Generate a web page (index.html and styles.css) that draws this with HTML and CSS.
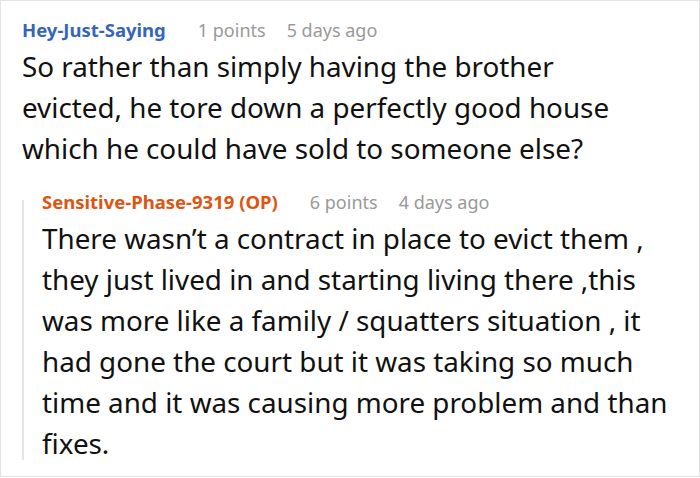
FILE: index.html
```html
<!DOCTYPE html>
<html>
<head>
<meta charset="utf-8">
<link rel="stylesheet" href="styles.css">
</head>
<body>
<div class="card">
  <div class="comment">
    <div class="meta">
      <span class="user user-blue">Hey-Just-Saying</span>
      <span class="info">1 points</span>
      <span class="info">5 days ago</span>
    </div>
    <p class="body body-top">So rather than simply having the brother evicted, he tore down a perfectly good house which he could have sold to someone else?</p>
    <div class="reply">
      <div class="thread"></div>
      <div class="reply-content">
        <div class="meta">
          <span class="user user-orange">Sensitive-Phase-9319 (OP)</span>
          <span class="info">6 points</span>
          <span class="info">4 days ago</span>
        </div>
        <p class="body body-reply">There wasn’t a contract in place to evict them , they just lived in and starting living there ,this was more like a family / squatters situation , it had gone the court but it was taking so much time and it was causing more problem and than fixes.</p>
      </div>
    </div>
  </div>
</div>
</body>
</html>
```
FILE: styles.css
```css
html, body {
  margin: 0;
  padding: 0;
  background: #fff;
}
.card {
  box-sizing: border-box;
  width: 700px;
  height: 477px;
  border: 1px solid #e3e3e3;
  padding: 13px 0 0 21px;
  font-family: "Noto Sans", "Open Sans", sans-serif;
  color: #111;
  overflow: hidden;
}
.meta {
  display: flex;
  align-items: baseline;
  gap: 21px;
  font-size: 18px;
  line-height: 32px;
  height: 32px;
}
.user {
  font-weight: 700;
  font-size: 18.5px;
  margin-right: 11px;
}
.user-blue { color: #3366bb; }
.user-orange { color: #dd5511; }
.info { color: #999; }
.body {
  margin: 0;
  font-size: 27.8px;
  line-height: 41px;
}
.body-top {
  width: 625px;
}
.body-reply {
  width: 650px;
}
.reply {
  display: flex;
  margin-top: 17px;
}
.thread {
  flex: none;
  width: 2px;
  background: #e6e6e6;
  margin: 14px 0 4px 0;
}
.reply-content {
  flex: 1;
  padding-left: 18px;
}
```
